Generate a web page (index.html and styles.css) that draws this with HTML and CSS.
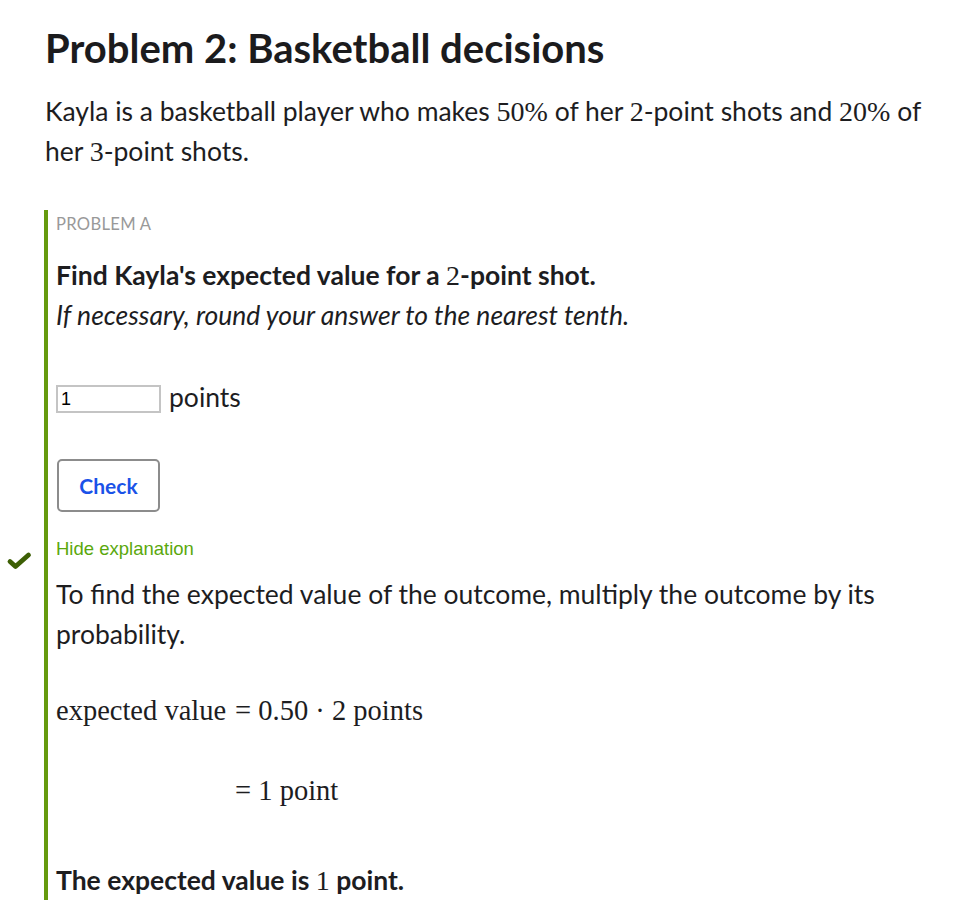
FILE: index.html
```html
<!DOCTYPE html>
<html>
<head>
<meta charset="utf-8">
<link rel="stylesheet" href="styles.css">
</head>
<body>
<main class="page">
  <h1 class="title">Problem 2: Basketball decisions</h1>
  <p class="intro">Kayla is a basketball player who makes <span class="m">50%</span> of her <span class="m">2</span>-point shots and <span class="m">20%</span> of her <span class="m">3</span>-point shots.</p>

  <section class="problem">
    <div class="label">PROBLEM A</div>
    <p class="question"><strong>Find Kayla's expected value for a <span class="m">2</span>-point shot.</strong><br><em>If necessary, round your answer to the nearest tenth.</em></p>

    <div class="answer">
      <input class="field" type="text" value="1">
      <span class="unit">points</span>
    </div>

    <button class="check">Check</button>

    <div class="explanation">
      <svg class="tick" width="26" height="20" viewBox="0 0 26 20"><path d="M4 10.5 L9.5 15.5 L22.5 4" fill="none" stroke="#3d5f05" stroke-width="4.8" stroke-linecap="round" stroke-linejoin="round"/></svg>
      <a class="toggle" href="#">Hide explanation</a>
      <p class="text">To find the expected value of the outcome, multiply the outcome by its probability.</p>
      <div class="math">
        <div class="mrow"><span class="mlhs">expected value</span><span class="mrhs">= 0.50 · 2 points</span></div>
        <div class="mrow"><span class="mlhs"></span><span class="mrhs">= 1 point</span></div>
      </div>
      <p class="result"><strong>The expected value is <span class="m">1</span> point.</strong></p>
    </div>
  </section>
</main>
</body>
</html>
```
FILE: styles.css
```css
* { box-sizing: border-box; }
html, body { margin: 0; padding: 0; background: #fff; }
body {
  font-family: Lato, "Noto Sans", sans-serif;
  color: #1d1d1f;
}
.page { padding: 24px 32px 0 45px; }
.title {
  font-size: 40px;
  font-weight: 700;
  line-height: 48px;
  margin: 0 0 19px;
  color: #1b1b1d;
}
.intro {
  font-size: 26.5px;
  line-height: 40px;
  margin: 0 0 39px;
}
.m {
  font-family: "Liberation Serif", "DejaVu Serif", serif;
  font-size: 28px;
  font-weight: 400;
  font-style: normal;
  line-height: 1;
}
.problem {
  border-left: 4px solid #659a0e;
  padding: 4px 0 0 8px;
  margin-left: -1px;
}
.label {
  font-size: 16.6px;
  letter-spacing: 0.3px;
  color: #999999;
  line-height: 20px;
  margin-bottom: 21px;
}
.question {
  font-size: 26.5px;
  line-height: 40px;
  margin: 0 0 50px;
}
.answer {
  display: flex;
  align-items: center;
  gap: 8px;
  margin-bottom: 46px;
  height: 28px;
}
.field {
  width: 105px;
  height: 28px;
  border: 2px solid #c4c4c4;
  padding: 1px 3px 0;
  font-family: "Liberation Sans", Arial, sans-serif;
  font-size: 18px;
  color: #000;
  margin: 0;
  outline: none;
}
.unit { font-size: 26.5px; line-height: 26px; margin-top: -4px; }
.check {
  display: block;
  width: 103px;
  height: 53px;
  border: 2px solid #8c8c8c;
  border-radius: 5px;
  background: #fff;
  color: #1a52e8;
  font-family: Lato, sans-serif;
  font-size: 21px;
  font-weight: 700;
  margin: 0 0 26px 1px;
  padding: 0;
}
.explanation { position: relative; }
.tick { position: absolute; left: -50px; top: 13px; }
.toggle {
  display: block;
  font-family: "Liberation Sans", Arial, sans-serif;
  font-size: 18.5px;
  color: #5aa80c;
  text-decoration: none;
  line-height: 22px;
  margin-bottom: 14px;
}
.text {
  font-size: 26.5px;
  line-height: 40px;
  margin: 0 0 37px;
}
.math {
  font-family: "Liberation Serif", "DejaVu Serif", serif;
  font-size: 28.5px;
  line-height: 40px;
  display: grid;
  grid-template-columns: max-content max-content;
  row-gap: 40px;
  margin-bottom: 49px;
}
.mrow { display: contents; }
.mlhs { text-align: right; padding-right: 9px; }
.result {
  font-size: 26.5px;
  line-height: 40px;
  margin: 0;
}
```
